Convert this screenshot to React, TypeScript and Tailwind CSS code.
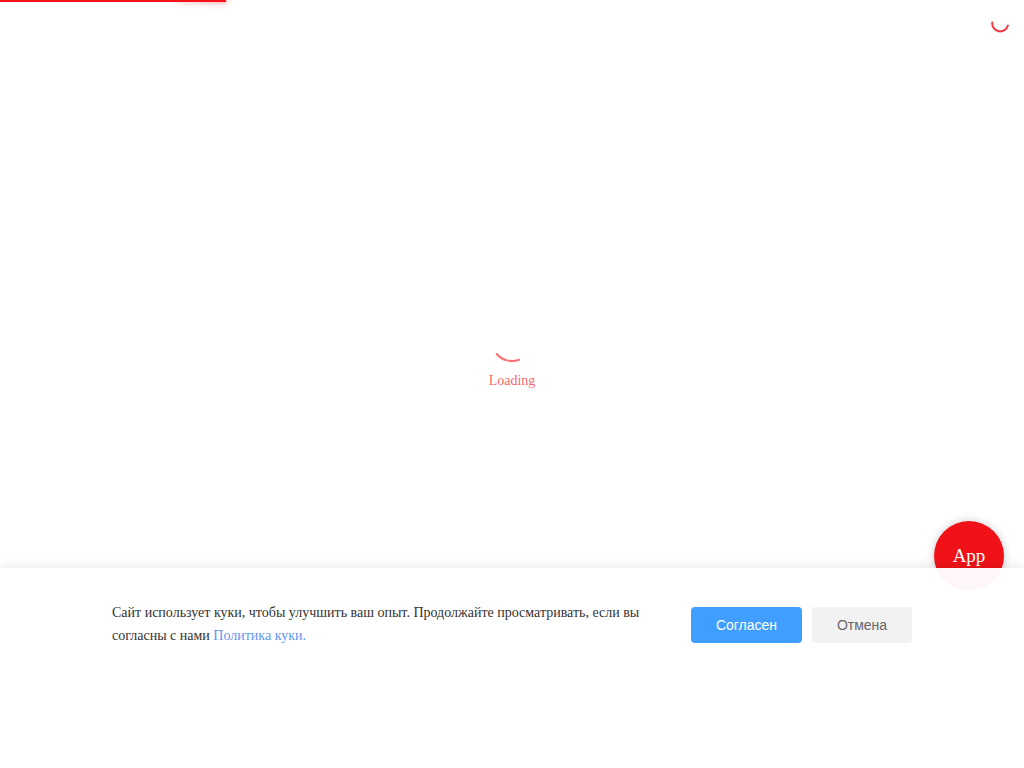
export default function App() {
  return (
    <div className="relative h-[768px] overflow-hidden bg-white font-['Liberation_Serif',serif]">
      {/* Page load progress */}
      <div className="absolute left-0 top-0 h-[2px] w-[226px] bg-[#f5141a]">
        <div className="absolute right-0 top-0 h-full w-[50px] -translate-y-[3px] rotate-[3deg] shadow-[0_0_10px_#f5141a,0_0_5px_#f5141a]" />
      </div>

      <svg className="absolute left-[988px] top-[12px] h-6 w-6" viewBox="0 0 24 24" fill="none">
        <path
          d="M4.2 10.6A8 8 0 0 0 19.9 13.4"
          stroke="#f5222d"
          strokeWidth="2"
          strokeLinecap="round"
          opacity="0.9"
        />
      </svg>

      <div className="flex flex-col items-center pt-[320px]">
        <svg className="h-[42px] w-[42px]" viewBox="0 0 42 42" fill="none">
          <path
            d="M5.7 34A20 20 0 0 0 28 39.7"
            stroke="#f5141a"
            strokeWidth="2"
            strokeLinecap="round"
            opacity="0.6"
          />
        </svg>
        <p className="mt-[9px] text-sm leading-[20px] text-[#f5141a]/70">Loading</p>
      </div>

      <button className="absolute left-[934px] top-[521px] flex h-[70px] w-[70px] items-center justify-center rounded-full bg-[#f01218] text-[19px] text-white shadow-[0_0_10px_rgba(0,0,0,0.2)]">
        App
      </button>

      {/* Cookie notice */}
      <div className="absolute inset-x-0 bottom-0 h-[200px] bg-white/[0.97] px-[112px] pt-[33px] shadow-[0_0_12px_rgba(0,0,0,0.12)]">
        <div className="flex items-start justify-between">
          <p className="w-[540px] text-sm leading-[23px] text-[#333]">
            Сайт использует куки, чтобы улучшить ваш опыт. Продолжайте просматривать, если вы согласны с нами{' '}
            <a className="text-[#6495ed]">Политика куки.</a>
          </p>
          <div className="mt-[6px] flex gap-[10px] font-['Liberation_Sans',sans-serif] text-sm">
            <button className="h-9 w-[111px] rounded bg-[#409eff] text-white">Согласен</button>
            <button className="h-9 w-[100px] rounded bg-[#f2f2f2] text-[#666]">Отмена</button>
          </div>
        </div>
      </div>
    </div>
  );
}
